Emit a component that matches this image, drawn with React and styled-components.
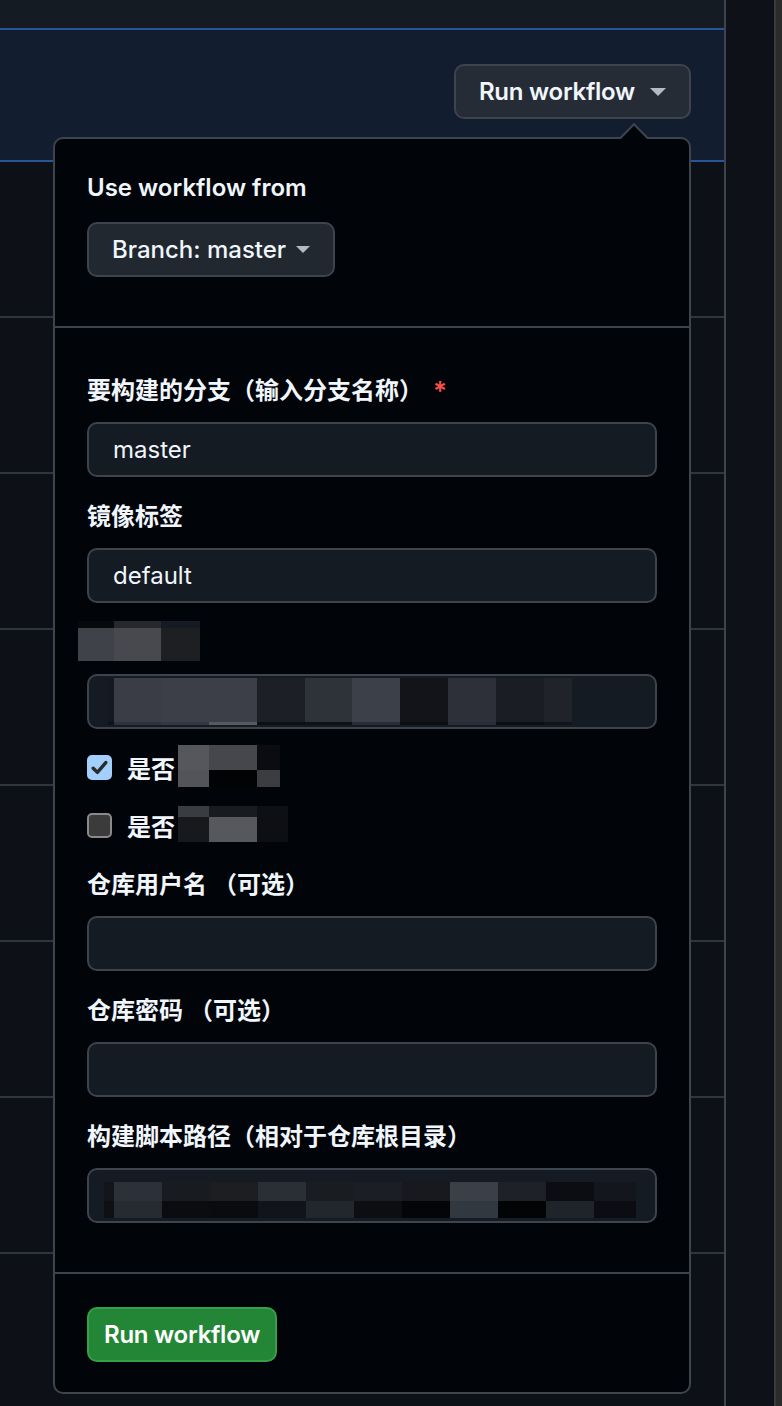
import React from "react";
import styled, { createGlobalStyle, css } from "styled-components";

const GlobalStyle = createGlobalStyle`
  html, body {
    margin: 0;
    padding: 0;
    height: 1406px;
    overflow: hidden;
    background: #0d1117;
  }
  body {
    font-family: Inter, "Noto Sans CJK SC", sans-serif;
    color: #f0f6fc;
  }
  * { box-sizing: border-box; }
`;

const Page = styled.div`
  display: flex;
  width: 782px;
  height: 1406px;
  overflow: hidden;
`;

const ListColumn = styled.div`
  flex: none;
  width: 726px;
  height: 100%;
  border-right: 2px solid #3d444d;
  display: flex;
  flex-direction: column;
  background: #0d1117;
`;

const SideColumn = styled.div`
  flex: none;
  width: 48px;
  background: #0e1117;
`;

const ScrollTrack = styled.div`
  flex: none;
  width: 8px;
  background: #2b2b2b;
  border-left: 2px solid #3a3a3a;
`;

const ListHeader = styled.div`
  flex: none;
  height: 30px;
  background: #151b23;
  border-bottom: 2px solid #275596;
`;

const FocusRow = styled.div`
  flex: none;
  height: 132px;
  background: #121d2f;
  border-bottom: 2px solid #275596;
  display: flex;
  justify-content: flex-end;
  align-items: flex-start;
  padding: 34px 33px 0 0;
  position: relative;
  z-index: 2;
`;

const Row = styled.div`
  flex: none;
  height: 156px;
  border-bottom: 2px solid #30363d;
`;

const Anchor = styled.div`
  position: relative;
`;

const Button = styled.button`
  display: inline-flex;
  align-items: center;
  gap: ${(p) => p.$gap || 16}px;
  height: 55px;
  padding: 0 ${(p) => p.$pad || 23}px;
  border-radius: 10px;
  border: 2px solid ${(p) => (p.$primary ? "#35a047" : "#3d444d")};
  background: ${(p) => (p.$primary ? "#238636" : p.$active ? "#262c36" : "#212830")};
  color: ${(p) => (p.$primary ? "#ffffff" : "#f0f6fc")};
  font-family: Inter, "Noto Sans CJK SC", sans-serif;
  font-size: 24px;
  font-weight: ${(p) => (p.$weight ? p.$weight : 600)};
  letter-spacing: ${(p) => (p.$tight ? "-0.25px" : "0")};
  line-height: 1;
  cursor: pointer;
  white-space: nowrap;
`;

const Caret = styled.span`
  display: inline-block;
  width: 0;
  height: 0;
  border-top: ${(p) => p.$size / 2}px solid #b4bac2;
  border-left: ${(p) => p.$size / 2}px solid transparent;
  border-right: ${(p) => p.$size / 2}px solid transparent;
`;

const Popover = styled.div`
  position: absolute;
  top: calc(100% + 18px);
  right: 0;
  width: 638px;
  background: #010409;
  border: 2px solid #3d444d;
  border-radius: 10px;
  display: flex;
  flex-direction: column;
`;

const PopCaret = styled.svg`
  position: absolute;
  top: -16px;
  right: 41px;
`;

const PopHeader = styled.div`
  padding: 31px 32px 49px;
  border-bottom: 2px solid #3d444d;
  display: flex;
  flex-direction: column;
  align-items: flex-start;
  gap: 16px;
`;

const PopBody = styled.div`
  padding: 45px 32px 49px;
  border-bottom: 2px solid #3d444d;
  display: flex;
  flex-direction: column;
  gap: 22px;
`;

const PopFooter = styled.div`
  padding: 33px 32px 30px;
  display: flex;
`;

const Title = styled.div`
  font-size: 24px;
  line-height: 36px;
  font-weight: 600;
`;

const Group = styled.div`
  display: flex;
  flex-direction: column;
  gap: 13px;
`;

const Label = styled.div`
  display: flex;
  align-items: center;
  height: 36px;
  font-size: 24px;
  line-height: 36px;
  font-weight: 600;
  white-space: nowrap;
`;

const Required = styled.span`
  color: #f85149;
  margin-left: 10px;
  font-size: 26px;
`;

const fieldCss = css`
  width: 100%;
  height: 55px;
  border: 2px solid #3d444d;
  border-radius: 10px;
  background: #151b23;
  color: #f0f6fc;
  font-family: Inter, "Noto Sans CJK SC", sans-serif;
  font-size: 24px;
  padding: 0 24px;
  outline: none;
`;

const TextInput = styled.input`
  ${fieldCss}
`;

const MaskedField = styled.div`
  ${fieldCss}
  display: flex;
  align-items: center;
  padding: 0 0 0 ${(p) => p.$pad}px;
`;

const CheckRow = styled.label`
  display: flex;
  align-items: center;
  height: 36px;
  padding-bottom: 4px;
  font-size: 24px;
  font-weight: 600;
`;

const Box = styled.span`
  flex: none;
  width: 25px;
  height: 25px;
  border-radius: 5px;
  margin-right: 15px;
  display: inline-flex;
  align-items: center;
  justify-content: center;
  background: ${(p) => (p.$checked ? "#a3cffc" : "#3b3b3b")};
  border: 2px solid ${(p) => (p.$checked ? "#a3cffc" : "#8a8a8a")};
`;

const CheckText = styled.span`
  white-space: nowrap;
  margin-right: 3px;
`;

const MosaicGrid = styled.div`
  flex: none;
  display: grid;
  grid-template-columns: ${(p) => p.$cols.map((c) => c + "px").join(" ")};
  grid-template-rows: ${(p) => p.$rows.map((r) => r + "px").join(" ")};
  margin: ${(p) => p.$margin || "0"};
`;

const Cell = styled.span`
  background: ${(p) => p.$bg};
`;

function Mosaic({ data, margin }) {
  return (
    <MosaicGrid $cols={data.cols} $rows={data.rows} $margin={margin}>
      {data.colors.flat().map((c, i) => (
        <Cell key={i} $bg={c} />
      ))}
    </MosaicGrid>
  );
}

const labelMask = {
  cols: [36, 47, 39],
  rows: [7, 33],
  colors: [
    ["#08090d", "#27282c", "#161a22"],
    ["#404249", "#48494e", "#1e1f23"],
  ],
};

const input3Mask = {
  cols: [6, 47, 48, 48, 48, 47, 48, 48, 48, 48, 28],
  rows: [44, 3],
  colors: [
    ["#141820", "#3a3d46", "#3c3f47", "#3c3f47", "#1c1f26", "#2e3239", "#3c4149", "#12141a", "#2d3038", "#1b1d24", "#20232a"],
    ["#0f121a", "#2f323a", "#353840", "#585a5f", "#0d0f14", "#0f1117", "#2a2d34", "#0d0f14", "#2a2d34", "#0d0e13", "#12141a"],
  ],
};

const check1Mask = {
  cols: [31, 48, 23],
  rows: [25, 17],
  colors: [
    ["#55575c", "#46474c", "#0b0c11"],
    ["#525459", "#020305", "#3c3d41"],
  ],
};

const check2Mask = {
  cols: [31, 48, 31],
  rows: [11, 25],
  colors: [
    ["#3b3c41", "#1a1b20", "#0f1015"],
    ["#18191d", "#57585e", "#0e0f14"],
  ],
};

const input6Mask = {
  cols: [10, 48, 48, 48, 48, 48, 48, 48, 48, 48, 48, 42],
  rows: [19, 17],
  colors: [
    ["#121519", "#2c3038", "#181b20", "#1c1e22", "#2a2f36", "#191c21", "#1b1e24", "#17191e", "#3b4048", "#1e2128", "#0b0d12", "#13161c"],
    ["#0e1014", "#262a31", "#0a0c10", "#090b0f", "#11141a", "#22272e", "#0c0e11", "#040508", "#323840", "#030406", "#1f232a", "#0b0d12"],
  ],
};

function CheckMark() {
  return (
    <svg width="19" height="19" viewBox="0 0 19 19">
      <path d="M3.2 10.2 L7.4 14.4 L15.8 4.6" fill="none" stroke="#2a2a2a" strokeWidth="3.4" strokeLinecap="round" strokeLinejoin="round" />
    </svg>
  );
}

export default function App() {
  return (
    <>
      <GlobalStyle />
      <Page>
        <ListColumn>
          <ListHeader />
          <FocusRow>
            <Anchor>
              <Button $active $tight $pad={23} $gap={15}>
                Run workflow
                <Caret $size={16} />
              </Button>
              <Popover>
                <PopCaret width="28" height="18" viewBox="0 0 28 18">
                  <polygon points="0,16.5 14,1 28,16.5" fill="#010409" />
                  <polyline points="0,15.5 14,1.2 28,15.5" fill="none" stroke="#3d444d" strokeWidth="2" />
                </PopCaret>
                <PopHeader>
                  <Title>Use workflow from</Title>
                  <Button $pad={23} $gap={10} $weight={500}>
                    Branch: master
                    <Caret $size={15} />
                  </Button>
                </PopHeader>
                <PopBody>
                  <Group>
                    <Label>
                      要构建的分支（输入分支名称）<Required>*</Required>
                    </Label>
                    <TextInput readOnly value="master" />
                  </Group>
                  <Group>
                    <Label>镜像标签</Label>
                    <TextInput readOnly value="default" />
                  </Group>
                  <Group>
                    <Label>
                      <Mosaic data={labelMask} margin="-4px 0 0 -9px" />
                    </Label>
                    <MaskedField $pad={19}>
                      <Mosaic data={input3Mask} />
                    </MaskedField>
                  </Group>
                  <CheckRow>
                    <Box $checked>
                      <CheckMark />
                    </Box>
                    <CheckText>是否</CheckText>
                    <Mosaic data={check1Mask} margin="-2px 0 0 0" />
                  </CheckRow>
                  <CheckRow>
                    <Box />
                    <CheckText>是否</CheckText>
                    <Mosaic data={check2Mask} margin="-2px 0 0 0" />
                  </CheckRow>
                  <Group>
                    <Label>仓库用户名 （可选）</Label>
                    <TextInput readOnly value="" />
                  </Group>
                  <Group>
                    <Label>仓库密码 （可选）</Label>
                    <TextInput readOnly value="" />
                  </Group>
                  <Group>
                    <Label>构建脚本路径（相对于仓库根目录）</Label>
                    <MaskedField $pad={15}>
                      <Mosaic data={input6Mask} margin="9px 0 0 0" />
                    </MaskedField>
                  </Group>
                </PopBody>
                <PopFooter>
                  <Button $primary $tight $pad={15}>
                    Run workflow
                  </Button>
                </PopFooter>
              </Popover>
            </Anchor>
          </FocusRow>
          {Array.from({ length: 8 }).map((_, i) => (
            <Row key={i} />
          ))}
        </ListColumn>
        <SideColumn />
        <ScrollTrack />
      </Page>
    </>
  );
}
